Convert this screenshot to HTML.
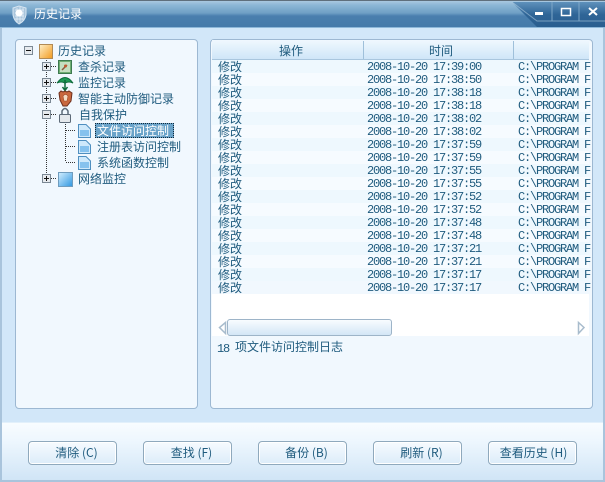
<!DOCTYPE html>
<html><head><meta charset="utf-8"><style>
html,body{margin:0;padding:0;background:#fff}
#w{position:relative;width:605px;height:482px;overflow:hidden;background:#d2e7f9;font:12px/14px "WenQuanYi Zen Hei","Noto Sans CJK SC","Liberation Sans",sans-serif;color:#1f5b7e}
#w div{position:absolute;white-space:nowrap}
.p{background:#f1f8fe;border:1px solid #9db8d2;border-radius:4px;box-sizing:border-box}
.t{height:14px;line-height:14px}
.b{top:441px;width:89px;height:24px;box-sizing:border-box;border:1px solid #8fa9bd;border-radius:4px;background:linear-gradient(#f6fbff,#dcecf9);box-shadow:inset 0 0 0 1px #fff;text-align:center;line-height:22px;color:#1f5b7e;padding-left:8px}
.r{left:212px;width:377px;height:13px}
.c{line-height:13px;top:0;height:13px}
.m{font-family:"Liberation Mono",monospace;letter-spacing:-1.2px;font-size:12px}
.r .m{top:1px}
</style></head><body><div id="w">
<div style="left:0;top:0;width:605px;height:27px;background:linear-gradient(#a9c8e0 0,#8db7d6 4px,#6f9fc5 12px,#4a7fae 15px,#457aa9 27px);border-top:1px solid #fff;box-sizing:border-box"></div>
<div style="left:0;top:0;width:605px;height:1px;background:#5f6f7c"></div>
<div style="left:0;top:27px;width:605px;height:1px;background:#8db8d9"></div>
<div style="left:0;top:28px;width:2px;height:454px;background:#a9c4dc"></div>
<div style="left:603px;top:28px;width:2px;height:454px;background:#a9c4dc"></div>
<svg style="position:absolute;left:0;top:0" width="605" height="482">
<defs>
<linearGradient id="d" x1="0" y1="0" x2="0" y2="1"><stop offset="0" stop-color="#5f91bb"/><stop offset=".5" stop-color="#2f6597"/><stop offset="1" stop-color="#2a5e8f"/></linearGradient>
<linearGradient id="o" x1="0" y1="0" x2="1" y2="1"><stop offset="0" stop-color="#fff0c8"/><stop offset="1" stop-color="#f29a1e"/></linearGradient>
<linearGradient id="bl" x1="0" y1="0" x2="1" y2="1"><stop offset="0" stop-color="#d4efff"/><stop offset="1" stop-color="#2e96e0"/></linearGradient>
</defs>
<path d="M512 2H605V27H537Z" fill="url(#d)"/>
<path d="M512 2L537 21H605" fill="none" stroke="#c4dbec" stroke-width="1" opacity=".5"/>
<path d="M552 2V21M579 2V21" stroke="#7ea7c8" />
<rect x="535" y="12" width="8" height="3" fill="#fff"/>
<rect x="561.500" y="8.500" width="9" height="7" fill="none" stroke="#fff" stroke-width="1.500"/>
<path d="M589 8L597 15M597 8L589 15" stroke="#fff" stroke-width="2"/>
<path d="M13 8L19 6L26 8V15Q25 21 19 24Q14 21 13 15Z" fill="#a9c5dc" stroke="#d8e6f2"/>
<path d="M15 10H24M15 13H24M15 16H24M15 19H23M17 8V22M20 7V23M23 8V20" stroke="#e6f0f8" stroke-width=".7"/>
<circle cx="19" cy="13" r="3.500" fill="#fff"/>
</svg>
<div class="t" style="left:34px;top:7px;color:#fff;font-size:12px">历史记录</div>

<div class="p" style="left:15px;top:39px;width:183px;height:370px"></div>
<div class="p" style="left:210px;top:39px;width:383px;height:370px"></div>
<div style="left:2px;top:422px;width:601px;height:60px;background:linear-gradient(#f8fcff,#eef7fe 30%,#cfe4f6);border-top:1px solid #e2f0fb;box-sizing:border-box;border-radius:0 0 4px 4px"></div>
<div style="left:2px;top:480px;width:601px;height:2px;background:#a9c4dc"></div>

<svg style="position:absolute;left:0;top:0" width="605" height="482">
<g stroke="#333" stroke-dasharray="1 1" fill="none">
<path d="M46.500 60V178M65.500 120V162"/>
<path d="M51 66.500H57M51 82.500H57M51 98.500H57M51 114.500H57M51 178.500H57M66 130.500H76M66 146.500H76M66 162.500H76"/>
</g>
<g fill="#e6eaee" stroke="#7b8894">
<rect x="24.500" y="46.500" width="8" height="8"/>
<rect x="42.500" y="62.500" width="8" height="8"/>
<rect x="42.500" y="78.500" width="8" height="8"/>
<rect x="42.500" y="94.500" width="8" height="8"/>
<rect x="42.500" y="110.500" width="8" height="8"/>
<rect x="42.500" y="174.500" width="8" height="8"/>
</g>
<path d="M26 50.500H31M44 66.500H49M46.500 64V69M44 82.500H49M46.500 80V85M44 98.500H49M46.500 96V101M44 114.500H49M44 178.500H49M46.500 176V181" stroke="#111"/>
<rect x="39.500" y="44.500" width="13" height="14" fill="url(#o)" stroke="#b08a55"/>
<rect x="58.500" y="60.500" width="13" height="13" fill="#6fae72" stroke="#3d7a50"/>
<rect x="60" y="62" width="10" height="10" fill="#c4dfc0"/>
<path d="M62 70L67 65" stroke="#8a5a40" stroke-width="1.500"/><circle cx="65.500" cy="66" r="1.500" fill="#c05a30"/>
<path d="M57 83Q65 72 73 83Q69 81 65 83Q61 81 57 83Z" fill="#1d9a55" stroke="#0e6b3c"/>
<path d="M65 80V90M62.500 87L65 90.500L67.500 87" stroke="#0e6b3c" stroke-width="1.500" fill="none"/>
<path d="M59 93L61 91L63 92L65 91L67 92L69 91L72 93L71 101L67 106H63L60 100Z" fill="#c9683f" stroke="#6e2f1c"/>
<path d="M63 96Q65.500 93 68 96L67 101H64Z" fill="#f4dcc5" stroke="#a04a28" stroke-width=".6"/>
<rect x="59.500" y="114.500" width="11" height="8" rx="1" fill="#e4e8ec" stroke="#5d6a78"/>
<path d="M62 114V111Q65 106 68 111V114" fill="none" stroke="#5d6a78" stroke-width="1.500"/>
<g id="doc">
<path d="M78.500 124.500H86L90.500 129V137.500H78.500Z" fill="#cfe9fb" stroke="#4f8fc0"/>
<path d="M80 131H89M80 133H89M80 135H89" stroke="#3c9be0"/>
</g>
<use href="#doc" y="16"/><use href="#doc" y="32"/>
<rect x="58.500" y="172.500" width="14" height="14" fill="url(#bl)" stroke="#6f9cbe"/>
</svg>

<div class="t" style="left:58px;top:44px">历史记录</div>
<div class="t" style="left:78px;top:60px">查杀记录</div>
<div class="t" style="left:78px;top:76px">监控记录</div>
<div class="t" style="left:78px;top:92px">智能主动防御记录</div>
<div class="t" style="left:79px;top:108px">自我保护</div>
<div style="left:95px;top:123px;width:79px;height:15px;background:#6aa3c9;border:1px dotted #10283a;box-sizing:border-box"></div>
<div class="t" style="left:97px;top:124px;color:#fff">文件访问控制</div>
<div class="t" style="left:97px;top:140px">注册表访问控制</div>
<div class="t" style="left:97px;top:156px">系统函数控制</div>
<div class="t" style="left:78px;top:172px">网络监控</div>

<div style="left:212px;top:40px;width:377px;height:20px;background:linear-gradient(#f0f8fe,#cfe6f8);border-bottom:1px solid #a9c6de;box-sizing:border-box"></div>
<div style="left:363px;top:41px;width:1px;height:18px;background:#9fc0da"></div>
<div style="left:513px;top:41px;width:1px;height:18px;background:#9fc0da"></div>
<div class="t" style="left:279px;top:44px">操作</div>
<div class="t" style="left:429px;top:44px">时间</div>
<div style="left:212px;top:60px;width:377px;height:276px;background:#fff"></div>

<div class="r" style="top:60px;background:#eef8fe"><div class="c" style="left:6px">修改</div><div class="c m" style="left:155px">2008-10-20 17:39:00</div><div class="c m" style="left:306px">C:\PROGRAM F</div></div>
<div class="r" style="top:73px;background:#f6fbff"><div class="c" style="left:6px">修改</div><div class="c m" style="left:155px">2008-10-20 17:38:50</div><div class="c m" style="left:306px">C:\PROGRAM F</div></div>
<div class="r" style="top:86px;background:#eef8fe"><div class="c" style="left:6px">修改</div><div class="c m" style="left:155px">2008-10-20 17:38:18</div><div class="c m" style="left:306px">C:\PROGRAM F</div></div>
<div class="r" style="top:99px;background:#f6fbff"><div class="c" style="left:6px">修改</div><div class="c m" style="left:155px">2008-10-20 17:38:18</div><div class="c m" style="left:306px">C:\PROGRAM F</div></div>
<div class="r" style="top:112px;background:#eef8fe"><div class="c" style="left:6px">修改</div><div class="c m" style="left:155px">2008-10-20 17:38:02</div><div class="c m" style="left:306px">C:\PROGRAM F</div></div>
<div class="r" style="top:125px;background:#f6fbff"><div class="c" style="left:6px">修改</div><div class="c m" style="left:155px">2008-10-20 17:38:02</div><div class="c m" style="left:306px">C:\PROGRAM F</div></div>
<div class="r" style="top:138px;background:#eef8fe"><div class="c" style="left:6px">修改</div><div class="c m" style="left:155px">2008-10-20 17:37:59</div><div class="c m" style="left:306px">C:\PROGRAM F</div></div>
<div class="r" style="top:151px;background:#f6fbff"><div class="c" style="left:6px">修改</div><div class="c m" style="left:155px">2008-10-20 17:37:59</div><div class="c m" style="left:306px">C:\PROGRAM F</div></div>
<div class="r" style="top:164px;background:#eef8fe"><div class="c" style="left:6px">修改</div><div class="c m" style="left:155px">2008-10-20 17:37:55</div><div class="c m" style="left:306px">C:\PROGRAM F</div></div>
<div class="r" style="top:177px;background:#f6fbff"><div class="c" style="left:6px">修改</div><div class="c m" style="left:155px">2008-10-20 17:37:55</div><div class="c m" style="left:306px">C:\PROGRAM F</div></div>
<div class="r" style="top:190px;background:#eef8fe"><div class="c" style="left:6px">修改</div><div class="c m" style="left:155px">2008-10-20 17:37:52</div><div class="c m" style="left:306px">C:\PROGRAM F</div></div>
<div class="r" style="top:203px;background:#f6fbff"><div class="c" style="left:6px">修改</div><div class="c m" style="left:155px">2008-10-20 17:37:52</div><div class="c m" style="left:306px">C:\PROGRAM F</div></div>
<div class="r" style="top:216px;background:#eef8fe"><div class="c" style="left:6px">修改</div><div class="c m" style="left:155px">2008-10-20 17:37:48</div><div class="c m" style="left:306px">C:\PROGRAM F</div></div>
<div class="r" style="top:229px;background:#f6fbff"><div class="c" style="left:6px">修改</div><div class="c m" style="left:155px">2008-10-20 17:37:48</div><div class="c m" style="left:306px">C:\PROGRAM F</div></div>
<div class="r" style="top:242px;background:#eef8fe"><div class="c" style="left:6px">修改</div><div class="c m" style="left:155px">2008-10-20 17:37:21</div><div class="c m" style="left:306px">C:\PROGRAM F</div></div>
<div class="r" style="top:255px;background:#f6fbff"><div class="c" style="left:6px">修改</div><div class="c m" style="left:155px">2008-10-20 17:37:21</div><div class="c m" style="left:306px">C:\PROGRAM F</div></div>
<div class="r" style="top:268px;background:#eef8fe"><div class="c" style="left:6px">修改</div><div class="c m" style="left:155px">2008-10-20 17:37:17</div><div class="c m" style="left:306px">C:\PROGRAM F</div></div>
<div class="r" style="top:281px;background:#f1f8fe"><div class="c" style="left:6px">修改</div><div class="c m" style="left:155px">2008-10-20 17:37:17</div><div class="c m" style="left:306px">C:\PROGRAM F</div></div>

<div style="left:227px;top:319px;width:165px;height:17px;box-sizing:border-box;border:1px solid #9db4c8;border-radius:3px;background:linear-gradient(#f8fcff,#d3e6f6)"></div>
<svg style="position:absolute;left:0;top:0" width="605" height="482">
<path d="M225.500 322.500L219.500 327.500L225.500 333.500Z" fill="#fff" stroke="#a8bccd" stroke-width="1.500"/>
<path d="M578.500 322.500L584 327.500L578.500 333.500Z" fill="#fff" stroke="#a8bccd" stroke-width="1.500"/>
</svg>
<div class="t" style="left:217px;top:340px"><span class="m" style="position:relative;top:1px;margin-right:6px">18</span>项文件访问控制日志</div>

<div class="b" style="left:28px">清除 (C)</div>
<div class="b" style="left:143px">查找 (F)</div>
<div class="b" style="left:258px">备份 (B)</div>
<div class="b" style="left:373px">刷新 (R)</div>
<div class="b" style="left:488px;padding-left:2px">查看历史 (H)</div>
</div></body></html>
